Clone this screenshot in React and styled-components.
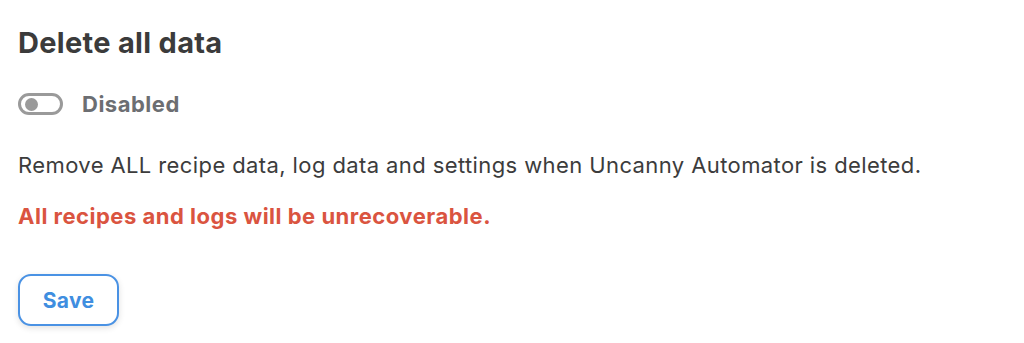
import React from 'react'
import styled, { createGlobalStyle } from 'styled-components'

const GlobalStyle = createGlobalStyle`
body {
  margin: 0;
  background: #ffffff;
  font-family: Inter, "Liberation Sans", Arial, sans-serif;
}
`

const Panel = styled.div`
padding: 26px 18px 16px 18px;
display: flex;
flex-direction: column;
align-items: flex-start;
`

const Title = styled.h2`
margin: 0;
font-size: 29px;
line-height: 34px;
font-weight: 700;
letter-spacing: 0.3px;
color: #3b3b3b;
`

const ToggleRow = styled.label`
display: flex;
align-items: center;
gap: 19px;
margin-top: 31px;
cursor: pointer;
`

const Track = styled.span`
box-sizing: border-box;
width: 45px;
height: 22px;
border: 3px solid ${(props) => (props.on ? '#3f8ee0' : '#9a9a9a')};
border-radius: 11px;
display: flex;
align-items: center;
padding: 0 4px;
justify-content: ${(props) => (props.on ? 'flex-end' : 'flex-start')};
`

const Knob = styled.span`
width: 13px;
height: 13px;
border-radius: 50%;
background-color: ${(props) => (props.on ? '#3f8ee0' : '#9a9a9a')};
`

const ToggleLabel = styled.span`
font-size: 22px;
font-weight: 700;
letter-spacing: 0.5px;
color: #6c6e72;
`

const Text = styled.p`
margin: 0;
margin-top: ${(props) => props.top}px;
font-size: 22px;
line-height: 24px;
letter-spacing: ${(props) => (props.warn ? 0.5 : 0.4)}px;
font-weight: ${(props) => (props.warn ? 700 : 400)};
color: ${(props) => (props.warn ? '#da5440' : '#3c3c3c')};
`

const SaveButton = styled.button`
margin-top: 46px;
width: 101px;
height: 52px;
border: 2px solid #4a92e4;
border-radius: 13px;
background-color: #ffffff;
box-shadow: 0 2px 6px rgba(0, 0, 0, 0.12);
font-family: Inter, "Liberation Sans", Arial, sans-serif;
font-size: 21px;
font-weight: 700;
letter-spacing: 0.3px;
color: #3f8ee0;
cursor: pointer;
`

const App = () => {
    const [on, setOn] = React.useState(false)
    return (
        <>
        <GlobalStyle />
        <Panel>
            <Title>Delete all data</Title>
            <ToggleRow onClick={() => setOn(!on)}>
                <Track on={on ? 1 : 0}>
                    <Knob on={on ? 1 : 0} />
                </Track>
                <ToggleLabel>{on ? 'Enabled' : 'Disabled'}</ToggleLabel>
            </ToggleRow>
            <Text top={36}>Remove ALL recipe data, log data and settings when Uncanny Automator is deleted.</Text>
            <Text top={27} warn>All recipes and logs will be unrecoverable.</Text>
            <SaveButton>Save</SaveButton>
        </Panel>
        </>
    )
}

export default App
